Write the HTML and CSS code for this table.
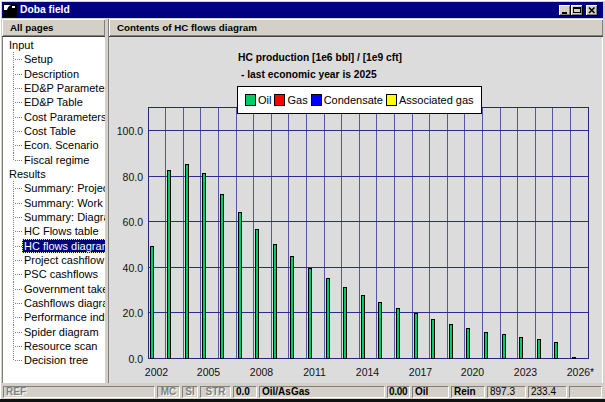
FILE: index.html
```html
<!DOCTYPE html>
<html>
<head>
<meta charset="utf-8">
<title>Doba field</title>
<link rel="stylesheet" href="styles.css">
</head>
<body>
<div class="window">
  <div class="titlebar">
    <svg class="app-icon" width="14" height="14" viewBox="0 0 14 14">
      <rect x="0" y="1" width="14" height="13" fill="#000"/>
      <path d="M1 2 H8 Q5 3 4 7 H1 Z" fill="#fff"/>
      <rect x="9" y="3" width="3" height="2" fill="#fff"/>
    </svg>
    <span class="title">Doba field</span>
    <div class="caption-buttons">
      <span class="cbtn"><svg width="12" height="11" viewBox="0 0 12 11"><rect x="3" y="7" width="5" height="2" fill="#000"/></svg></span>
      <span class="cbtn"><svg width="12" height="11" viewBox="0 0 12 11"><rect x="2.5" y="2.5" width="7" height="5" fill="none" stroke="#000"/><rect x="2" y="2" width="8" height="2" fill="#000"/></svg></span>
      <span class="cbtn cbtn-close"><svg width="12" height="11" viewBox="0 0 12 11"><path d="M3 2.5 L8.5 8 M8.5 2.5 L3 8" stroke="#000" stroke-width="1.6"/></svg></span>
    </div>
  </div>

  <div class="main">
    <div class="left">
      <div class="pane-header">All pages</div>
      <div class="tree">
        <div class="row root"><span class="t">Input</span></div>
        <div class="row child"><span class="t">Setup</span></div>
        <div class="row child"><span class="t">Description</span></div>
        <div class="row child"><span class="t">ED&amp;P Parameters</span></div>
        <div class="row child"><span class="t">ED&amp;P Table</span></div>
        <div class="row child"><span class="t">Cost Parameters</span></div>
        <div class="row child"><span class="t">Cost Table</span></div>
        <div class="row child"><span class="t">Econ. Scenario</span></div>
        <div class="row child last"><span class="t">Fiscal regime</span></div>
        <div class="row root"><span class="t">Results</span></div>
        <div class="row child"><span class="t">Summary: Project</span></div>
        <div class="row child"><span class="t">Summary: Work</span></div>
        <div class="row child"><span class="t">Summary: Diagram</span></div>
        <div class="row child"><span class="t">HC Flows table</span></div>
        <div class="row child sel"><span class="t">HC flows diagram</span></div>
        <div class="row child"><span class="t">Project cashflow</span></div>
        <div class="row child"><span class="t">PSC cashflows</span></div>
        <div class="row child"><span class="t">Government take</span></div>
        <div class="row child"><span class="t">Cashflows diagram</span></div>
        <div class="row child"><span class="t">Performance ind.</span></div>
        <div class="row child"><span class="t">Spider diagram</span></div>
        <div class="row child"><span class="t">Resource scan</span></div>
        <div class="row child last"><span class="t">Decision tree</span></div>
      </div>
    </div>
    <div class="splitter"></div>
    <div class="right">
      <div class="pane-header">Contents of HC flows diagram</div>
      <div class="chart">
        <div class="chart-title">
          <div>HC production [1e6 bbl] / [1e9 cft]</div>
          <div class="sub">- last economic year is 2025</div>
        </div>
        <svg class="plot" width="493" height="300" viewBox="0 0 493 300">
          <path class="vgrid" d="M56.5 24.5V275.5M74.5 24.5V275.5M91.5 24.5V275.5M109.5 24.5V275.5M127.5 24.5V275.5M144.5 24.5V275.5M162.5 24.5V275.5M179.5 24.5V275.5M197.5 24.5V275.5M215.5 24.5V275.5M232.5 24.5V275.5M250.5 24.5V275.5M267.5 24.5V275.5M285.5 24.5V275.5M303.5 24.5V275.5M320.5 24.5V275.5M338.5 24.5V275.5M355.5 24.5V275.5M373.5 24.5V275.5M391.5 24.5V275.5M408.5 24.5V275.5M426.5 24.5V275.5M443.5 24.5V275.5M461.5 24.5V275.5"/>
          <path class="hgrid" d="M39.5 47.5H479.5M39.5 93.5H479.5M39.5 138.5H479.5M39.5 184.5H479.5M39.5 229.5H479.5"/>
          <rect class="frame" x="39.5" y="24.5" width="440" height="251"/>
          <g class="bars">
            <rect x="41.5" y="163.5" width="3" height="112"/>
            <rect x="58.5" y="87.5" width="3" height="188"/>
            <rect x="76.5" y="81.5" width="3" height="194"/>
            <rect x="93.5" y="90.5" width="3" height="185"/>
            <rect x="111.5" y="111.5" width="3" height="164"/>
            <rect x="129.5" y="129.5" width="3" height="146"/>
            <rect x="146.5" y="146.5" width="3" height="129"/>
            <rect x="164.5" y="161.5" width="3" height="114"/>
            <rect x="181.5" y="173.5" width="3" height="102"/>
            <rect x="199.5" y="185.5" width="3" height="90"/>
            <rect x="217.5" y="195.5" width="3" height="80"/>
            <rect x="234.5" y="204.5" width="3" height="71"/>
            <rect x="252.5" y="212.5" width="3" height="63"/>
            <rect x="269.5" y="219.5" width="3" height="56"/>
            <rect x="287.5" y="225.5" width="3" height="50"/>
            <rect x="305.5" y="230.5" width="3" height="45"/>
            <rect x="322.5" y="236.5" width="3" height="39"/>
            <rect x="340.5" y="241.5" width="3" height="34"/>
            <rect x="357.5" y="245.5" width="3" height="30"/>
            <rect x="375.5" y="249.5" width="3" height="26"/>
            <rect x="393.5" y="251.5" width="3" height="24"/>
            <rect x="410.5" y="254.5" width="3" height="21"/>
            <rect x="428.5" y="256.5" width="3" height="19"/>
            <rect x="445.5" y="259.5" width="3" height="16"/>
            <rect x="463.5" y="274.5" width="3" height="1"/>
          </g>
          <g class="ylabels">
            <text x="34" y="48">100.0</text>
            <text x="34" y="94">80.0</text>
            <text x="34" y="139">60.0</text>
            <text x="34" y="185">40.0</text>
            <text x="34" y="230">20.0</text>
            <text x="34" y="276">0.0</text>
          </g>
          <g class="xlabels">
            <text x="47.5" y="289">2002</text>
            <text x="99.5" y="289">2005</text>
            <text x="152.5" y="289">2008</text>
            <text x="205.5" y="289">2011</text>
            <text x="258.5" y="289">2014</text>
            <text x="311.5" y="289">2017</text>
            <text x="363.5" y="289">2020</text>
            <text x="416.5" y="289">2023</text>
            <text x="471.5" y="289">2026*</text>
          </g>
        </svg>
        <div class="legend">
          <span class="sw sw-oil"></span><span class="lbl">Oil</span>
          <span class="sw sw-gas"></span><span class="lbl">Gas</span>
          <span class="sw sw-cond"></span><span class="lbl">Condensate</span>
          <span class="sw sw-ag"></span><span class="lbl">Associated gas</span>
        </div>
      </div>
    </div>
  </div>

  <div class="statusbar">
    <span class="panel dis p-ref">REF</span>
    <span class="panel dis ctr p-mc">MC</span>
    <span class="panel dis ctr p-si">SI</span>
    <span class="panel dis ctr p-str">STR</span>
    <span class="panel p-z1">0.0</span>
    <span class="panel p-fluid">Oil/AsGas</span>
    <span class="panel p-z2">0.00</span>
    <span class="panel p-oil">Oil</span>
    <span class="panel p-rein">Rein</span>
    <span class="panel reg p-v1">897.3</span>
    <span class="panel reg p-v2">233.4</span>
    <span class="panel p-empty"></span>
  </div>
</div>
</body>
</html>
```
FILE: styles.css
```css
* { box-sizing: border-box; }
html, body { margin: 0; padding: 0; }
body {
  width: 605px;
  height: 402px;
  overflow: hidden;
  background: #d4d0c8;
  font-family: "Liberation Sans", Arial, sans-serif;
  color: #000;
}
.window {
  width: 605px;
  height: 402px;
  display: flex;
  flex-direction: column;
  padding: 2px 2px 0 2px;
  background: #d4d0c8;
  box-shadow: inset 1px 1px #ffffff;
  border-bottom: 3px solid #101010;
}

/* title bar */
.titlebar {
  height: 16px;
  flex: none;
  background: #000080;
  display: flex;
  align-items: center;
  padding-left: 1px;
}
.app-icon { display: block; margin-right: 3px; }
.title {
  color: #fff;
  font-weight: bold;
  font-size: 10.3px;
  line-height: 16px;
}
.caption-buttons {
  margin-left: auto;
  display: flex;
  align-items: center;
  padding-right: 5px;
}
.cbtn {
  display: block;
  width: 12px;
  height: 11px;
  background: #d4d0c8;
  box-shadow: inset -1px -1px #000, inset 1px 1px #fff, inset -2px -2px #808080;
}
.cbtn svg { display: block; }
.cbtn-close { margin-left: 3px; }

/* main split */
.main {
  flex: none;
  height: 364px;
  margin-top: 1px;
  display: flex;
}
.left {
  width: 103px;
  flex: none;
  display: flex;
  flex-direction: column;
}
.splitter { width: 3px; flex: none; }
.right {
  flex: 1;
  display: flex;
  flex-direction: column;
  border-left: 1px solid #808080;
}
.pane-header {
  height: 18px;
  flex: none;
  font-weight: bold;
  font-size: 9.8px;
  line-height: 17px;
  padding-left: 8px;
  white-space: nowrap;
  background: #d4d0c8;
  box-shadow: inset 1px 1px #fff, inset -1px -1px #808080;
  border-bottom: 1px solid #404040;
}

/* tree */
.tree {
  flex: 1;
  background: #fff;
  border-left: 1px solid #808080;
  padding-top: 1px;
  overflow: hidden;
  font-size: 11px;
}
.row {
  position: relative;
  height: 14.33px;
  line-height: 14.33px;
  white-space: nowrap;
}
.root { padding-left: 6px; }
.child { padding-left: 21px; }
.child::before {
  content: "";
  position: absolute;
  left: 10px;
  top: 0;
  bottom: 0;
  width: 1px;
  background: repeating-linear-gradient(to bottom, #808080 0 1px, transparent 1px 2px);
}
.child.last::before { bottom: 50%; }
.child::after {
  content: "";
  position: absolute;
  left: 11px;
  top: 50%;
  width: 9px;
  height: 1px;
  background: repeating-linear-gradient(to right, transparent 0 1px, #808080 1px 2px);
}
.sel .t {
  display: inline-block;
  vertical-align: top;
  height: 14px;
  line-height: 14px;
  padding: 0 2px;
  margin-left: -2px;
  background: #000080;
  color: #fff;
  outline: 1px dotted #e8e8b0;
  outline-offset: -1px;
}

/* chart */
.chart {
  flex: 1;
  position: relative;
  background: #dcdcdc;
  border-right: 1px solid #fff;
}
.chart-title {
  padding: 12px 0 0 129px;
  height: 46px;
  font-weight: bold;
  font-size: 10.25px;
  line-height: 17px;
  white-space: nowrap;
}
.chart-title .sub { padding-left: 3px; }
.plot { display: block; }
.vgrid { fill: none; stroke: #5656a8; stroke-width: 1; }
.hgrid { fill: none; stroke: #2c2c8c; stroke-width: 1; }
.frame { fill: none; stroke: #26267a; stroke-width: 1; }
.bars rect { fill: #00cc66; stroke: #000; stroke-width: 1; }
.ylabels text {
  font-family: "Liberation Sans", Arial, sans-serif;
  font-size: 10.5px;
  fill: #111;
  text-anchor: end;
  dominant-baseline: central;
}
.xlabels text {
  font-family: "Liberation Sans", Arial, sans-serif;
  font-size: 10.5px;
  fill: #111;
  text-anchor: middle;
  dominant-baseline: central;
}
.legend {
  position: absolute;
  left: 128px;
  top: 49px;
  width: 245px;
  height: 28px;
  background: #fff;
  border: 1px solid #000;
  display: flex;
  align-items: center;
  padding-left: 7px;
  font-size: 11px;
  white-space: nowrap;
}
.sw {
  display: block;
  width: 11px;
  height: 12px;
  border: 1px solid #000;
  margin-right: 2px;
  flex: none;
}
.lbl { margin-right: 3px; line-height: 12px; }
.sw-oil { background: #00cc66; }
.sw-gas { background: #ff0000; }
.sw-cond { background: #0000ff; }
.sw-ag { background: #ffff00; }

/* status bar */
.statusbar {
  flex: none;
  height: 16px;
  display: flex;
  gap: 2px;
  padding: 3px 0 1px 1px;
}
.panel {
  display: block;
  height: 12px;
  border: 1px solid;
  border-color: #808080 #fff #fff #808080;
  font-weight: bold;
  font-size: 10px;
  line-height: 10px;
  padding-left: 2px;
  white-space: nowrap;
  overflow: hidden;
}
.panel.dis { color: #808080; text-shadow: 1px 1px #fff; }
.panel.ctr { text-align: center; padding-left: 0; }
.panel.reg { font-weight: normal; }
.p-ref { width: 152px; }
.p-mc { width: 23px; }
.p-si { width: 16px; }
.p-str { width: 31px; }
.p-z1 { width: 24px; }
.p-fluid { width: 126px; }
.p-z2 { width: 23px; padding-left: 1px; letter-spacing: -0.3px; }
.p-oil { width: 37px; }
.p-rein { width: 34px; }
.p-v1 { width: 39px; }
.p-v2 { width: 39px; }
.p-empty { width: 33px; }
```
